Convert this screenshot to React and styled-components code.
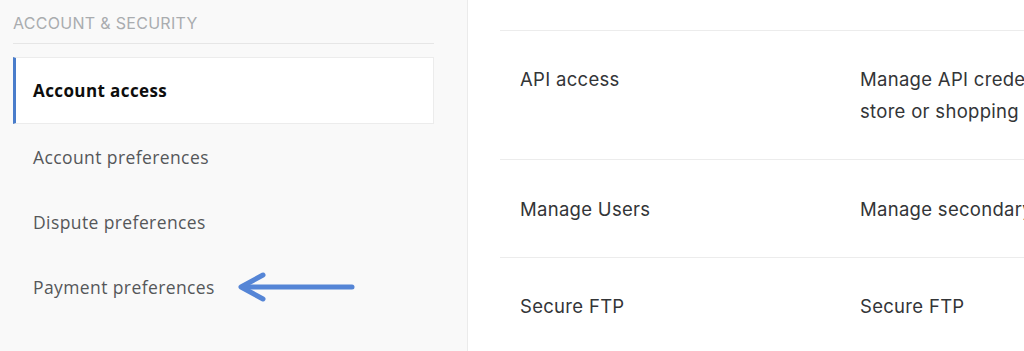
import React from "react";
import styled, { createGlobalStyle } from "styled-components";

const Global = createGlobalStyle`
  html, body {
    margin: 0;
    padding: 0;
    background: #ffffff;
  }
  #root {
    width: 1024px;
    height: 351px;
    overflow: hidden;
  }
`;

const Page = styled.div`
  display: flex;
  width: 1024px;
  height: 351px;
  overflow: hidden;
  font-family: "Open Sans", "DejaVu Sans", sans-serif;
`;

/* левое меню */
const Sidebar = styled.aside`
  width: 468px;
  flex-shrink: 0;
  background: #f9f9f9;
  border-right: 1px solid #ebebeb;
  padding: 0 33px 0 13px;
  box-sizing: border-box;
  display: flex;
  flex-direction: column;
`;

const SectionTitle = styled.div`
  font-family: "Inter", "Liberation Sans", sans-serif;
  font-size: 16px;
  letter-spacing: 0.3px;
  color: #a9acaf;
  padding-top: 14px;
  height: 44px;
  box-sizing: border-box;
  border-bottom: 1px solid #e6e6e6;
  line-height: 18px;
`;

const NavList = styled.nav`
  display: flex;
  flex-direction: column;
  margin-top: 13px;
`;

const NavItem = styled.div`
  height: ${(p) => (p.$active ? "67px" : "65px")};
  display: flex;
  align-items: center;
  gap: 22px;
  box-sizing: border-box;
  padding-left: 17px;
  font-size: ${(p) => (p.$active ? "17px" : "17.5px")};
  letter-spacing: 0.4px;
  color: ${(p) => (p.$active ? "#0d0d0d" : "#555759")};
  font-weight: ${(p) => (p.$active ? 700 : 400)};
  background: ${(p) => (p.$active ? "#ffffff" : "transparent")};
  border: 1px solid ${(p) => (p.$active ? "#ececec" : "transparent")};
  border-left: 3px solid ${(p) => (p.$active ? "#4a7dcb" : "transparent")};
`;

const Arrow = () => (
  <svg width="120" height="30" viewBox="0 0 120 30">
    <path
      d="M6 15 H115"
      stroke="#5585d6"
      strokeWidth="5"
      strokeLinecap="round"
      fill="none"
    />
    <path
      d="M26 3 L4 15 L26 27"
      stroke="#5585d6"
      strokeWidth="5"
      strokeLinecap="round"
      strokeLinejoin="round"
      fill="none"
    />
  </svg>
);

/* правая часть */
const Main = styled.main`
  flex: 1;
  background: #ffffff;
  padding-left: 32px;
  padding-top: 30px;
  display: flex;
  flex-direction: column;
  font-family: "Inter", "Liberation Sans", sans-serif;
  color: #333537;
  overflow: hidden;
`;

const Row = styled.div`
  flex-shrink: 0;
  display: grid;
  grid-template-columns: 340px 1fr;
  border-top: 1px solid #ececec;
  height: ${(p) => p.$h}px;
  box-sizing: border-box;
  padding-top: ${(p) => p.$pt}px;
  padding-left: 20px;
  font-size: 18.5px;
  letter-spacing: 0.3px;
  line-height: 32px;
  white-space: nowrap;
`;

const Cell = styled.div`
  overflow: hidden;
`;

const rows = [
  { name: "API access", desc: ["Manage API credentials for your", "store or shopping cart"], h: 129, pt: 32 },
  { name: "Manage Users", desc: ["Manage secondary users"], h: 98, pt: 33 },
  { name: "Secure FTP", desc: ["Secure FTP"], h: 100, pt: 32 },
];

const App = () => {
  return (
    <>
      <Global />
      <Page>
        <Sidebar>
          <SectionTitle>ACCOUNT &amp; SECURITY</SectionTitle>
          <NavList>
            <NavItem $active>Account access</NavItem>
            <NavItem>Account preferences</NavItem>
            <NavItem>Dispute preferences</NavItem>
            <NavItem>
              Payment preferences
              <Arrow />
            </NavItem>
          </NavList>
        </Sidebar>
        <Main>
          {rows.map((r) => (
            <Row key={r.name} $h={r.h} $pt={r.pt}>
              <Cell>{r.name}</Cell>
              <Cell>
                {r.desc.map((d) => (
                  <div key={d}>{d}</div>
                ))}
              </Cell>
            </Row>
          ))}
        </Main>
      </Page>
    </>
  );
};

export default App;
